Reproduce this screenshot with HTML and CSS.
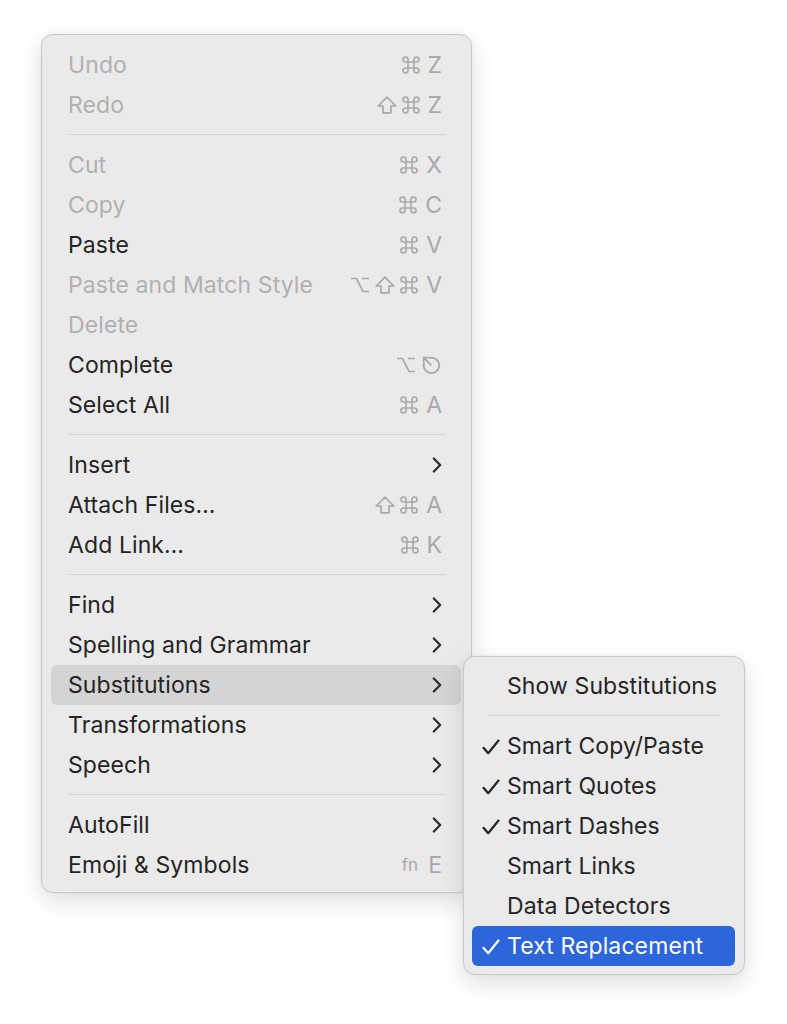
FILE: index.html
```html
<!DOCTYPE html>
<html>
<head>
<meta charset="utf-8">
<link rel="stylesheet" href="styles.css">
</head>
<body>
<svg width="0" height="0" class="defs">
  <defs>
    <symbol id="cmd" viewBox="0 0 18 18"><path d="M6 6H3.5A2.5 2.5 0 1 1 6 3.5V14.5A2.5 2.5 0 1 1 3.5 12H14.5A2.5 2.5 0 1 1 12 14.5V3.5A2.5 2.5 0 1 1 14.5 6Z" fill="none" stroke="currentColor" stroke-width="1.6"/></symbol>
    <symbol id="shift" viewBox="0 0 20 18"><path d="M10 1.2L18.8 10H14V16.8H6V10H1.2Z" fill="none" stroke="currentColor" stroke-width="1.7" stroke-linejoin="round"/></symbol>
    <symbol id="opt" viewBox="0 0 20 18"><path d="M1 2.5H6.5L13 15.5H19M12 2.5H19" fill="none" stroke="currentColor" stroke-width="1.7"/></symbol>
    <symbol id="esc" viewBox="0 0 20 20"><path d="M7.6 2.9A7.4 7.4 0 1 1 2.9 7.6" fill="none" stroke="currentColor" stroke-width="1.7"/><path d="M9.8 9.8L2.6 2.6M2.6 7.4V2.6H7.4" fill="none" stroke="currentColor" stroke-width="1.7"/></symbol>
    <symbol id="chev" viewBox="0 0 10 16"><path d="M1.8 1.5L8.2 8L1.8 14.5" fill="none" stroke="currentColor" stroke-width="2.2" stroke-linecap="round" stroke-linejoin="round"/></symbol>
    <symbol id="check" viewBox="0 0 18 16"><path d="M1.5 8.8L6.2 14.2L16.5 1.5" fill="none" stroke="currentColor" stroke-width="2.2" stroke-linecap="round" stroke-linejoin="round"/></symbol>
  </defs>
</svg>
<div class="stage">
  <div class="menu main">
    <div class="item disabled"><span class="label">Undo</span><span class="keys"><svg class="k"><use href="#cmd"/></svg><span class="ch">Z</span></span></div>
    <div class="item disabled"><span class="label">Redo</span><span class="keys"><svg class="k sh"><use href="#shift"/></svg><svg class="k"><use href="#cmd"/></svg><span class="ch">Z</span></span></div>
    <div class="sep"></div>
    <div class="item disabled"><span class="label">Cut</span><span class="keys"><svg class="k"><use href="#cmd"/></svg><span class="ch">X</span></span></div>
    <div class="item disabled"><span class="label">Copy</span><span class="keys"><svg class="k"><use href="#cmd"/></svg><span class="ch">C</span></span></div>
    <div class="item"><span class="label">Paste</span><span class="keys"><svg class="k"><use href="#cmd"/></svg><span class="ch">V</span></span></div>
    <div class="item disabled"><span class="label">Paste and Match Style</span><span class="keys"><svg class="k sh"><use href="#opt"/></svg><svg class="k sh"><use href="#shift"/></svg><svg class="k"><use href="#cmd"/></svg><span class="ch">V</span></span></div>
    <div class="item disabled"><span class="label">Delete</span></div>
    <div class="item"><span class="label">Complete</span><span class="keys"><svg class="k sh"><use href="#opt"/></svg><svg class="k es"><use href="#esc"/></svg></span></div>
    <div class="item"><span class="label">Select All</span><span class="keys"><svg class="k"><use href="#cmd"/></svg><span class="ch">A</span></span></div>
    <div class="sep"></div>
    <div class="item"><span class="label">Insert</span><svg class="chev"><use href="#chev"/></svg></div>
    <div class="item"><span class="label">Attach Files…</span><span class="keys"><svg class="k sh"><use href="#shift"/></svg><svg class="k"><use href="#cmd"/></svg><span class="ch">A</span></span></div>
    <div class="item"><span class="label">Add Link…</span><span class="keys"><svg class="k"><use href="#cmd"/></svg><span class="ch">K</span></span></div>
    <div class="sep"></div>
    <div class="item"><span class="label">Find</span><svg class="chev"><use href="#chev"/></svg></div>
    <div class="item"><span class="label">Spelling and Grammar</span><svg class="chev"><use href="#chev"/></svg></div>
    <div class="item open"><span class="label">Substitutions</span><svg class="chev"><use href="#chev"/></svg>
      <div class="menu sub">
        <div class="item"><span class="label">Show Substitutions</span></div>
        <div class="sep"></div>
        <div class="item"><svg class="check"><use href="#check"/></svg><span class="label">Smart Copy/Paste</span></div>
        <div class="item"><svg class="check"><use href="#check"/></svg><span class="label">Smart Quotes</span></div>
        <div class="item"><svg class="check"><use href="#check"/></svg><span class="label">Smart Dashes</span></div>
        <div class="item"><span class="label">Smart Links</span></div>
        <div class="item"><span class="label">Data Detectors</span></div>
        <div class="item selected"><svg class="check"><use href="#check"/></svg><span class="label">Text Replacement</span></div>
      </div>
    </div>
    <div class="item"><span class="label">Transformations</span><svg class="chev"><use href="#chev"/></svg></div>
    <div class="item"><span class="label">Speech</span><svg class="chev"><use href="#chev"/></svg></div>
    <div class="sep"></div>
    <div class="item"><span class="label">AutoFill</span><svg class="chev"><use href="#chev"/></svg></div>
    <div class="item"><span class="label">Emoji &amp; Symbols</span><span class="keys"><span class="fn">fn</span><span class="ch">E</span></span></div>
  </div>
</div>
</body>
</html>
```

FILE: styles.css
```css
* { box-sizing: border-box; }
html, body { margin: 0; padding: 0; background: #ffffff; }
body {
  font-family: Inter, "Liberation Sans", sans-serif;
  font-size: 23px;
  letter-spacing: 0.1px;
  color: #242424;
  min-height: 1024px;
}
.defs { position: absolute; width: 0; height: 0; }
.stage {
  padding: 34px 0 140px 41px;
}
.menu {
  background: #eaeaea;
  border: 1px solid #c9c9c9;
  border-radius: 12px;
  box-shadow: 0 8px 24px rgba(0,0,0,0.13), 0 0 3px rgba(0,0,0,0.06);
}
.main {
  width: 431px;
  padding: 10px 10px 7px 9px;
}
.item {
  position: relative;
  height: 40px;
  display: flex;
  align-items: center;
  padding: 0 19px 0 17px;
  border-radius: 6px;
  white-space: nowrap;
}
.item .label { flex: 1; }
.item.disabled .label { color: #b1b1b1; }
.item.open { background: #d4d4d4; z-index: 2; }
.sep {
  height: 1px;
  background: #d3d3d3;
  margin: 9px 15px 10px 17px;
}
.keys {
  display: flex;
  align-items: center;
  gap: 5px;
  color: #a9a9a9;
  letter-spacing: 0;
}
.k { width: 18px; height: 18px; }
.k.sh { width: 20px; height: 18px; }
.k.es { width: 21px; height: 21px; }
.ch { font-size: 23px; color: #a9a9a9; margin-left: 3px; }
.fn { font-size: 17px; color: #a9a9a9; margin-right: 2px; }
.chev { width: 10px; height: 16px; color: #2a2a2a; }
.sub {
  position: absolute;
  left: 412px;
  top: -9px;
  width: 282px;
  padding: 9px 9px 8px 8px;
  color: #242424;
  z-index: 5;
}
.sub .item { padding: 0 10px 0 35px; }
.sub .sep { margin: 9px 16px 10px 16px; }
.check {
  position: absolute;
  left: 10px;
  top: 13px;
  width: 18px;
  height: 16px;
  color: #242424;
}
.sub .item.selected { background: #2d65da; color: #ffffff; }
.sub .item.selected .check { color: #ffffff; }
```
